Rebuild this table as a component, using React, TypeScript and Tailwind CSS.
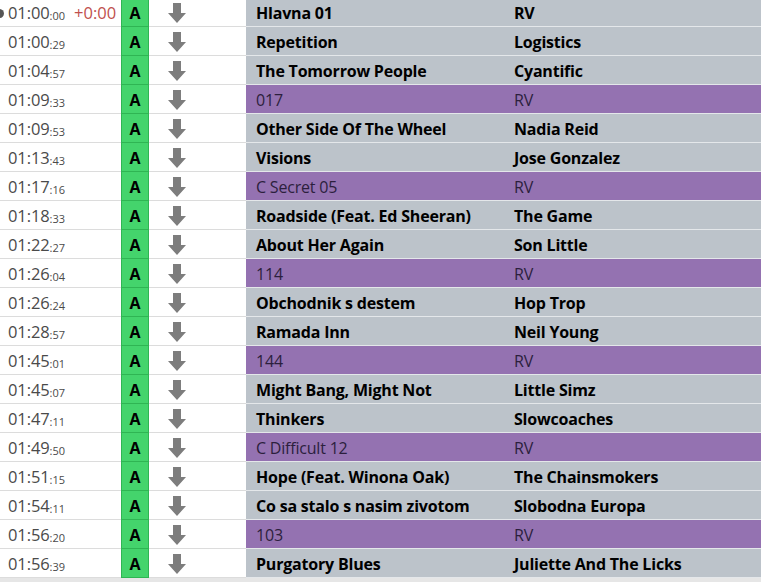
import React from "react";

type Row = {
  time: string;
  sec: string;
  title: string;
  artist: string;
  marker?: boolean;
};

const rows: Row[] = [
  { time: "01:00", sec: "00", title: "Hlavna 01", artist: "RV" },
  { time: "01:00", sec: "29", title: "Repetition", artist: "Logistics" },
  { time: "01:04", sec: "57", title: "The Tomorrow People", artist: "Cyantific" },
  { time: "01:09", sec: "33", title: "017", artist: "RV", marker: true },
  { time: "01:09", sec: "53", title: "Other Side Of The Wheel", artist: "Nadia Reid" },
  { time: "01:13", sec: "43", title: "Visions", artist: "Jose Gonzalez" },
  { time: "01:17", sec: "16", title: "C Secret 05", artist: "RV", marker: true },
  { time: "01:18", sec: "33", title: "Roadside (Feat. Ed Sheeran)", artist: "The Game" },
  { time: "01:22", sec: "27", title: "About Her Again", artist: "Son Little" },
  { time: "01:26", sec: "04", title: "114", artist: "RV", marker: true },
  { time: "01:26", sec: "24", title: "Obchodnik s destem", artist: "Hop Trop" },
  { time: "01:28", sec: "57", title: "Ramada Inn", artist: "Neil Young" },
  { time: "01:45", sec: "01", title: "144", artist: "RV", marker: true },
  { time: "01:45", sec: "07", title: "Might Bang, Might Not", artist: "Little Simz" },
  { time: "01:47", sec: "11", title: "Thinkers", artist: "Slowcoaches" },
  { time: "01:49", sec: "50", title: "C Difficult 12", artist: "RV", marker: true },
  { time: "01:51", sec: "15", title: "Hope (Feat. Winona Oak)", artist: "The Chainsmokers" },
  { time: "01:54", sec: "11", title: "Co sa stalo s nasim zivotom", artist: "Slobodna Europa" },
  { time: "01:56", sec: "20", title: "103", artist: "RV", marker: true },
  { time: "01:56", sec: "39", title: "Purgatory Blues", artist: "Juliette And The Licks" },
];

function DownArrow() {
  return (
    <svg width="18" height="20" viewBox="0 0 18 20">
      <path d="M5 0 H13 V10 H18 L9 20 L0 10 H5 Z" fill="#7d7d7d" />
    </svg>
  );
}

export default function App() {
  return (
    <div
      className="w-[761px] h-[582px] overflow-hidden bg-[#e6e6e6]"
      style={{ fontFamily: '"Open Sans", "Noto Sans", sans-serif' }}
    >
      <div className="mt-[-2px] bg-white">
        {rows.map((r, i) => (
          <div key={i} className="flex h-[29px]">
            <div className="flex w-[121px] items-center border-b border-[#dcdcdc] pt-[2px] text-[#4a4a4a]">
              {i === 0 ? (
                <span className="ml-[-5px] mr-[4px] h-[9px] w-[9px] rounded-full bg-[#555]" />
              ) : (
                <span className="w-[8px]" />
              )}
              <span className="text-[16.5px] leading-[20px] tracking-[-0.1px]">{r.time}</span>
              <span className="mt-[5px] text-[11px] leading-[14px]">:{r.sec}</span>
              {i === 0 && (
                <span className="ml-[9px] text-[16.5px] leading-[20px] text-[#c0504d]">+0:00</span>
              )}
            </div>
            <div className="flex w-[28px] items-center justify-center border border-t-0 border-[#2fb553] bg-[#44d46c] pt-[2px] text-[16px] font-bold leading-[20px] text-black">
              A
            </div>
            <div className="flex w-[97px] items-center border-b border-[#dcdcdc] pl-[19px] pt-[1px]">
              <DownArrow />
            </div>
            <div
              className={`flex flex-1 items-center border-b border-[#e4e7ea] pt-[2px] text-[16px] leading-[20px] ${
                r.marker ? "bg-[#9472b1] font-normal text-[#2c1f3d]" : "bg-[#bcc3ca] font-bold text-black"
              }`}
            >
              <span className="w-[259px] whitespace-nowrap pl-[10px] tracking-[-0.2px]">{r.title}</span>
              <span className="whitespace-nowrap pl-[9px] tracking-[-0.2px]">{r.artist}</span>
            </div>
          </div>
        ))}
      </div>
    </div>
  );
}
